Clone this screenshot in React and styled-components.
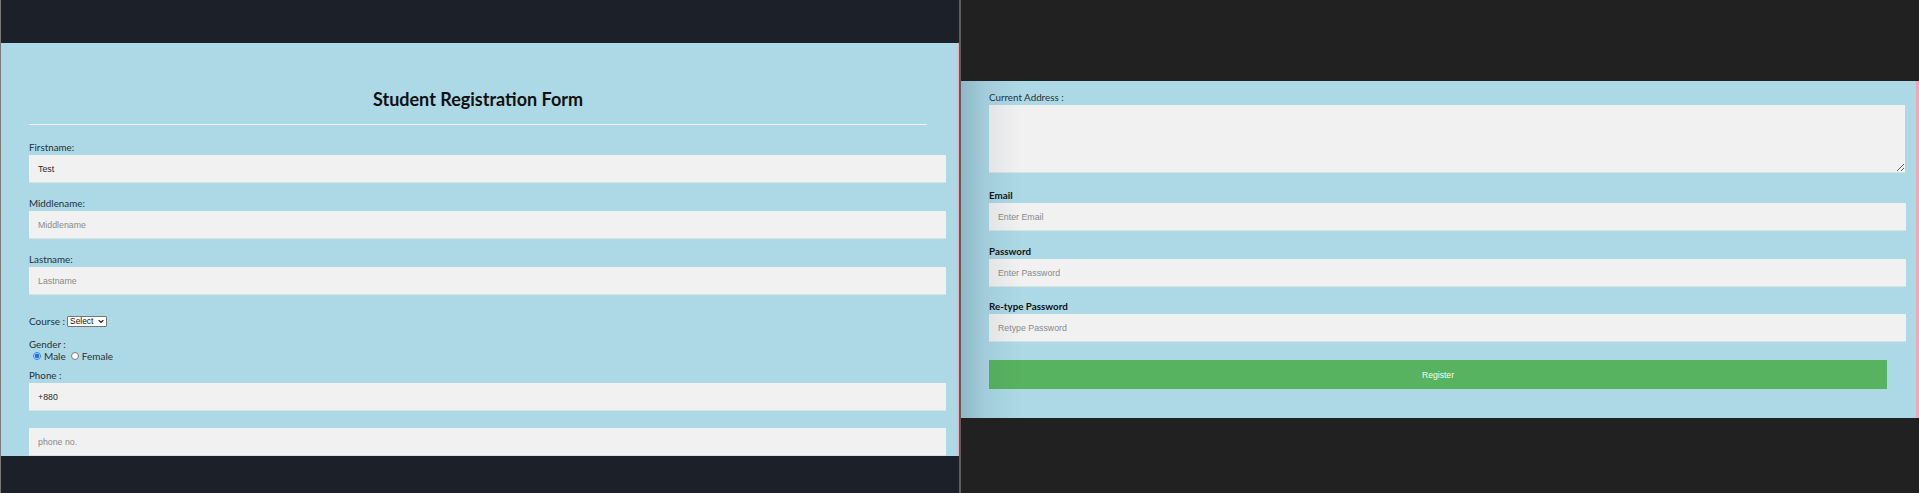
import React from 'react';
import styled, { createGlobalStyle } from 'styled-components';

const GlobalStyle = createGlobalStyle`
  html, body {
    margin: 0;
    padding: 0;
    height: 493px;
    overflow: hidden;
    background: #1c2028;
  }
  * {
    box-sizing: border-box;
  }
`;

const Screen = styled.div`
  display: flex;
  width: 1919px;
  height: 493px;
`;

const LeftPane = styled.div`
  width: 959px;
  display: flex;
  flex-direction: column;
  background: #1c2028;
  border-left: 1px solid #7a7a7a;
`;

const RightPane = styled.div`
  flex: 1;
  display: flex;
  flex-direction: column;
  background: #212121;
`;

const Divider = styled.div`
  width: 2px;
  background: #5e5e5e;
`;

const DarkBar = styled.div`
  height: ${p => p.$h}px;
  flex-shrink: 0;
`;

const FormArea = styled.div`
  position: relative;
  height: ${p => p.$h}px;
  flex-shrink: 0;
  overflow: hidden;
  background: #add8e6;
  border-right: ${p => p.$edge}px solid #eaa9b4;
  padding: ${p => p.$top}px 0 0 28px;
  font-family: Lato, "Open Sans", sans-serif;
  color: #1e2a30;

  ${p => p.$shadow && `
    &::before {
      content: '';
      position: absolute;
      left: 0;
      top: 0;
      bottom: 0;
      width: 60px;
      background: linear-gradient(to right, rgba(40, 70, 80, 0.22), rgba(40, 70, 80, 0.08) 40%, rgba(40, 70, 80, 0));
      pointer-events: none;
    }
  `}
`;

const Content = styled.div`
  width: 898px;
  display: flex;
  flex-direction: column;
`;

const Title = styled.h2`
  margin: 0;
  text-align: center;
  font-size: 18px;
  line-height: 22px;
  font-weight: 700;
  color: #111;
`;

const Rule = styled.hr`
  margin: 14px 0 0;
  border: none;
  height: 1px;
  background: #eef3f4;
`;

const Label = styled.label`
  display: block;
  margin-top: ${p => p.$mt}px;
  font-size: 9.8px;
  line-height: 12px;
  font-weight: ${p => (p.$bold ? 700 : 400)};
  color: ${p => (p.$bold ? '#111' : '#263238')};
`;

const Input = styled.input`
  display: block;
  width: calc(100% + 19px);
  height: 28px;
  margin-top: ${p => p.$mt ?? 2}px;
  padding: 0 9px;
  border: none;
  border-bottom: 1px solid #d8e2e5;
  background: #f1f1f1;
  font-family: "Liberation Sans", Arial, sans-serif;
  font-size: 8.8px;
  color: #2a2a2a;
  outline: none;

  &::placeholder {
    color: #8a8a8a;
  }
`;

const TextArea = styled.textarea`
  display: block;
  width: calc(100% + 18px);
  height: 68px;
  margin-top: 2px;
  padding: 6px 9px;
  border: none;
  border-bottom: 1px solid #d8e2e5;
  background: #f1f1f1;
  resize: vertical;
  outline: none;
`;

const InlineRow = styled.div`
  display: flex;
  align-items: center;
  gap: ${p => p.$gap ?? 2}px;
  margin-top: ${p => p.$mt}px;
  height: 12px;
  font-size: 10px;
  color: #263238;
`;

const SelectBox = styled.span`
  position: relative;
  display: inline-flex;
  align-items: center;
`;

const Select = styled.select`
  appearance: none;
  -webkit-appearance: none;
  height: 11px;
  width: 40px;
  padding: 0 10px 0 2px;
  border: 1px solid #767676;
  border-radius: 1px;
  background: #fff;
  font-family: "Liberation Sans", Arial, sans-serif;
  font-size: 8.4px;
  line-height: 9px;
  color: #111;
  outline: none;
`;

const Chevron = styled.svg`
  position: absolute;
  right: 3px;
  top: 3px;
  width: 6px;
  height: 5px;
  pointer-events: none;
`;

const Radio = styled.input`
  width: 8px;
  height: 8px;
  margin: 0 0 0 4px;
  accent-color: #1a73e8;
`;

const RadioText = styled.span`
  margin-left: 3px;
  margin-right: 1px;
`;

const RegisterButton = styled.button`
  margin-top: 18px;
  width: 100%;
  height: 29px;
  border: none;
  background: #57b35f;
  color: #f4fff4;
  font-family: "Liberation Sans", Arial, sans-serif;
  font-size: 8.6px;
  cursor: pointer;
`;

export default function App() {
  return (
    <>
      <GlobalStyle />
      <Screen>
        <LeftPane>
          <DarkBar $h={43} />
          <FormArea $h={413} $edge={1} $top={45}>
            <Content>
              <Title>Student Registration Form</Title>
              <Rule />
              <Label $mt={16}>Firstname:</Label>
              <Input defaultValue="Test" />
              <Label $mt={14}>Middlename:</Label>
              <Input placeholder="Middlename" />
              <Label $mt={14}>Lastname:</Label>
              <Input placeholder="Lastname" />
              <InlineRow $mt={20}>
                Course :
                <SelectBox>
                  <Select defaultValue="">
                    <option value="">Select</option>
                    <option>BCA</option>
                    <option>BBA</option>
                    <option>B.Tech</option>
                  </Select>
                  <Chevron viewBox="0 0 6 5">
                    <path d="M0.7 1.2 L3 3.5 L5.3 1.2" fill="none" stroke="#111" strokeWidth="1.2" />
                  </Chevron>
                </SelectBox>
              </InlineRow>
              <Label $mt={11}>Gender :</Label>
              <InlineRow $mt={0} $gap={0}>
                <Radio type="radio" name="gender" defaultChecked />
                <RadioText>Male</RadioText>
                <Radio type="radio" name="gender" />
                <RadioText>Female</RadioText>
              </InlineRow>
              <Label $mt={7}>Phone :</Label>
              <Input defaultValue="+880" />
              <Input $mt={17} placeholder="phone no." />
            </Content>
          </FormArea>
          <DarkBar $h={37} />
        </LeftPane>
        <Divider />
        <RightPane>
          <DarkBar $h={81} />
          <FormArea $h={337} $edge={3} $top={10} $shadow>
            <Content>
              <Label $mt={0}>Current Address :</Label>
              <TextArea />
              <Label $mt={16} $bold>Email</Label>
              <Input placeholder="Enter Email" />
              <Label $mt={14} $bold>Password</Label>
              <Input type="password" placeholder="Enter Password" />
              <Label $mt={13} $bold>Re-type Password</Label>
              <Input type="password" placeholder="Retype Password" />
              <RegisterButton>Register</RegisterButton>
            </Content>
          </FormArea>
        </RightPane>
      </Screen>
    </>
  );
}
